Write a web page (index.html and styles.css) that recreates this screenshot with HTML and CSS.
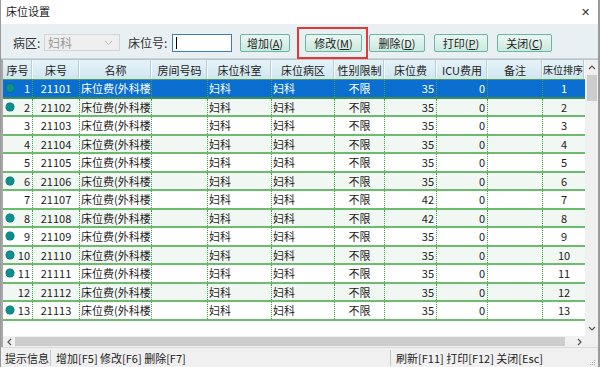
FILE: index.html
```html
<!DOCTYPE html>
<html>
<head>
<meta charset="utf-8">
<title>床位设置</title>
<link rel="stylesheet" href="styles.css">
</head>
<body>
<div class="window">
  <div class="titlebar">
    <span class="title">床位设置</span>
    <span class="close">&#x2715;</span>
  </div>

  <div class="toolbar">
    <span class="label label-ward">病区:</span>
    <div class="select">
      <span>妇科</span>
      <svg width="9" height="6" viewBox="0 0 9 6"><path d="M1 1 L4.5 4.5 L8 1" fill="none" stroke="#b8b8b8" stroke-width="1"/></svg>
    </div>
    <span class="label label-bed">床位号:</span>
    <div class="input"><span class="caret"></span></div>
    <button class="btn btn-add">增加(<u>A</u>)</button>
    <span class="mark">
      <button class="btn btn-edit">修改(<u>M</u>)</button>
    </span>
    <button class="btn btn-del">删除(<u>D</u>)</button>
    <button class="btn btn-print">打印(<u>P</u>)</button>
    <button class="btn btn-close">关闭(<u>C</u>)</button>
  </div>

  <div class="grid-wrap">
    <div class="grid-main">
      <div class="grid">
        <div class="row head">
          <div class="c">序号</div>
          <div class="c">床号</div>
          <div class="c">名称</div>
          <div class="c">房间号码</div>
          <div class="c">床位科室</div>
          <div class="c">床位病区</div>
          <div class="c">性别限制</div>
          <div class="c">床位费</div>
          <div class="c">ICU费用</div>
          <div class="c">备注</div>
          <div class="c tight">床位排序</div>
        </div>
        <div id="rows"></div>
      </div>
      <div class="vscroll">
        <div class="arrow">
          <svg width="8" height="5" viewBox="0 0 8 5"><path d="M1 4 L4 1 L7 4" fill="none" stroke="#555" stroke-width="1.2"/></svg>
        </div>
        <div class="vthumb"></div>
        <div class="vtrack"></div>
        <div class="arrow">
          <svg width="8" height="5" viewBox="0 0 8 5"><path d="M1 1 L4 4 L7 1" fill="none" stroke="#555" stroke-width="1.2"/></svg>
        </div>
      </div>
    </div>
    <div class="hscroll-row">
      <div class="hscroll">
        <div class="harrow">
          <svg width="5" height="8" viewBox="0 0 5 8"><path d="M4 1 L1 4 L4 7" fill="none" stroke="#555" stroke-width="1.2"/></svg>
        </div>
        <div class="hthumb"></div>
        <div class="harrow">
          <svg width="5" height="8" viewBox="0 0 5 8"><path d="M1 1 L4 4 L1 7" fill="none" stroke="#555" stroke-width="1.2"/></svg>
        </div>
      </div>
      <div class="corner"></div>
    </div>
  </div>

  <div class="statusbar">
    <span class="sb-hint">提示信息</span>
    <span class="sb-keys">增加[F5] 修改[F6] 删除[F7]</span>
    <span class="sb-right">刷新[F11] 打印[F12] 关闭[Esc]</span>
    <span class="grip">
      <svg width="8" height="8" viewBox="0 0 8 8" fill="#aaa"><rect x="6" y="2" width="1" height="1"/><rect x="4" y="4" width="1" height="1"/><rect x="6" y="4" width="1" height="1"/><rect x="2" y="6" width="1" height="1"/><rect x="4" y="6" width="1" height="1"/><rect x="6" y="6" width="1" height="1"/></svg>
    </span>
  </div>
</div>

<script>
  var beds = [
    [1, 35, true], [2, 35, true], [3, 35, false], [4, 35, false], [5, 35, false],
    [6, 35, true], [7, 42, false], [8, 42, true], [9, 35, true], [10, 35, true],
    [11, 35, true], [12, 35, false], [13, 35, true]
  ];
  var rows = document.getElementById("rows");
  for (var i = 0; i < beds.length; i++) {
    var b = beds[i];
    var row = document.createElement("div");
    row.className = "row";
    if (i == 0) row.className += " selected";
    else if (b[0] % 2 == 0) row.className += " alt";
    var num = 21100 + b[0];
    row.innerHTML =
      '<div class="c num">' + (b[2] ? '<span class="dot"></span>' : '') + b[0] + '</div>' +
      '<div class="c mid">' + num + '</div>' +
      '<div class="c left">床位费(外科楼</div>' +
      '<div class="c"></div>' +
      '<div class="c left">妇科</div>' +
      '<div class="c left">妇科</div>' +
      '<div class="c mid">不限</div>' +
      '<div class="c right">' + b[1] + '</div>' +
      '<div class="c right">0</div>' +
      '<div class="c"></div>' +
      '<div class="c mid">' + b[0] + '</div>';
    rows.appendChild(row);
  }
</script>
</body>
</html>
```

FILE: styles.css
```css
body {
    margin: 0;
    font-family: "Noto Sans CJK SC", "Liberation Sans", sans-serif;
    font-size: 11px;
    color: #1c1c1c;
    background: #ffffff;
}

.window {
    width: 600px;
    height: 367px;
    display: flex;
    flex-direction: column;
    box-sizing: border-box;
    border-left: 1px solid #9a9a9a;
    border-right: 2px solid #9a9a9a;
    overflow: hidden;
}

.titlebar {
    height: 22px;
    flex: none;
    display: flex;
    align-items: center;
    justify-content: space-between;
    padding: 0 8px 2px 5px;
    background: #ffffff;
}

.close {
    font-size: 11px;
    color: #333;
}

.toolbar {
    height: 35px;
    flex: none;
    box-sizing: border-box;
    display: flex;
    align-items: center;
    padding: 3px 0 0 12px;
    background: #e8f0f4;
    border-bottom: 1px solid #c9d4d9;
}

.label {
    font-size: 12px;
    color: #333;
    white-space: nowrap;
}
.label-ward { width: 31px; }
.label-bed { width: 44px; margin-left: 8px; }

.select {
    width: 76px;
    height: 17px;
    box-sizing: border-box;
    display: flex;
    align-items: center;
    justify-content: space-between;
    padding: 0 6px 0 3px;
    background: #efefef;
    border: 1px solid #d4d4d4;
    color: #9a9a9a;
    font-size: 12px;
}

.input {
    width: 60px;
    height: 18px;
    box-sizing: border-box;
    background: #fff;
    border: 1px solid #3d7fb5;
    display: flex;
    align-items: center;
    padding-left: 3px;
}
.caret {
    width: 1px;
    height: 12px;
    background: #000;
}

.btn {
    height: 18px;
    box-sizing: border-box;
    padding: 0;
    font-family: inherit;
    font-size: 11px;
    color: #222;
    border: 1px solid #6bb5a6;
    border-radius: 2px;
    background: linear-gradient(#eaf7f2, #cce9de);
}
.btn u { text-underline-offset: 1px; }
.btn-add { width: 50px; margin-left: 8px; }

/* red highlight box round the edit button */
.mark {
    display: flex;
    margin-left: 7px;
    padding: 5px 4px 5px 6px;
    border: 2px solid #e53935;
}
.btn-edit { width: 57px; }
.btn-del { width: 56px; margin-left: 1px; }
.btn-print { width: 54px; margin-left: 9px; }
.btn-close { width: 55px; margin-left: 9px; }

.grid-wrap {
    flex: 1;
    display: flex;
    flex-direction: column;
    border-left: 2px solid #a8a8a8;
    border-top: 1px solid #b8c4c8;
    min-height: 0;
}

.grid-main {
    flex: 1;
    display: flex;
    min-height: 0;
}

.grid {
    width: 582px;
    flex: none;
    background: #fff;
    overflow: hidden;
}

.row {
    display: grid;
    grid-template-columns: 30px 47px 72px 56px 64px 63px 50px 52px 51px 55px 42px;
    height: 18.5px;
    box-sizing: border-box;
    border-bottom: 2px solid #6dbb6d;
}
.row.alt { background: #f1f7f2; }
.row.selected {
    background: #0a6fd0;
    color: #ffffff;
    border-bottom-color: #3b8e5a;
}

.row .c {
    display: flex;
    align-items: center;
    padding: 0 2px;
    border-right: 1px dotted #3aa83a;
    white-space: nowrap;
    overflow: hidden;
}
.row .c:last-child { border-right: none; }
.row .num { justify-content: flex-end; position: relative; }
.row .mid { justify-content: center; }
.row .left { justify-content: flex-start; padding: 0 1px; }
.row .right { justify-content: flex-end; }

.dot {
    position: absolute;
    left: 3px;
    top: 4px;
    width: 8px;
    height: 8px;
    border-radius: 50%;
    background: #0f8e8e;
    box-shadow: 0 0 0 0.5px #0b6a6a;
}

.row.head {
    height: 20px;
    border-bottom: 1px solid #4f9a5a;
    background: linear-gradient(#e6f3f8, #cfe6ef);
    color: #222;
}
.row.head .c {
    justify-content: center;
    border-right: 1px solid #f4f9fb;
    box-shadow: inset -1px 0 0 #b9ced6;
}
.row.head .tight {
    justify-content: flex-start;
    padding: 0;
    font-size: 10px;
}

.vscroll {
    width: 14px;
    flex: none;
    display: flex;
    flex-direction: column;
    background: #f0f0f0;
}
.arrow {
    height: 15px;
    display: flex;
    align-items: center;
    justify-content: center;
}
.vthumb {
    height: 26px;
    margin: 0 2px;
    background: #cdcdcd;
}
.vtrack { flex: 1; }

.hscroll-row {
    height: 11px;
    flex: none;
    display: flex;
}
.hscroll {
    width: 582px;
    display: flex;
    align-items: center;
    background: #f0f0f0;
}
.harrow {
    width: 12px;
    height: 11px;
    display: flex;
    align-items: center;
    justify-content: center;
}
.hthumb {
    flex: 1;
    height: 9px;
    margin-right: 8px;
    background: #cdcdcd;
}
.corner {
    flex: 1;
    background: #f0f0f0;
}

.statusbar {
    height: 19px;
    flex: none;
    display: flex;
    align-items: center;
    background: #f0f0f0;
    border-top: 1px solid #dadada;
    font-size: 11px;
    color: #222;
    white-space: nowrap;
}
.sb-hint {
    width: 45px;
    flex: none;
    padding-left: 4px;
    border-right: 1px solid #c8c8c8;
}
.sb-keys {
    width: 334px;
    flex: none;
    padding-left: 5px;
}
.sb-right {
    flex: 1;
    padding-left: 5px;
    border-left: 1px solid #c8c8c8;
}
.grip {
    width: 10px;
    display: flex;
    align-items: flex-end;
    align-self: flex-end;
    padding-bottom: 1px;
}
```
